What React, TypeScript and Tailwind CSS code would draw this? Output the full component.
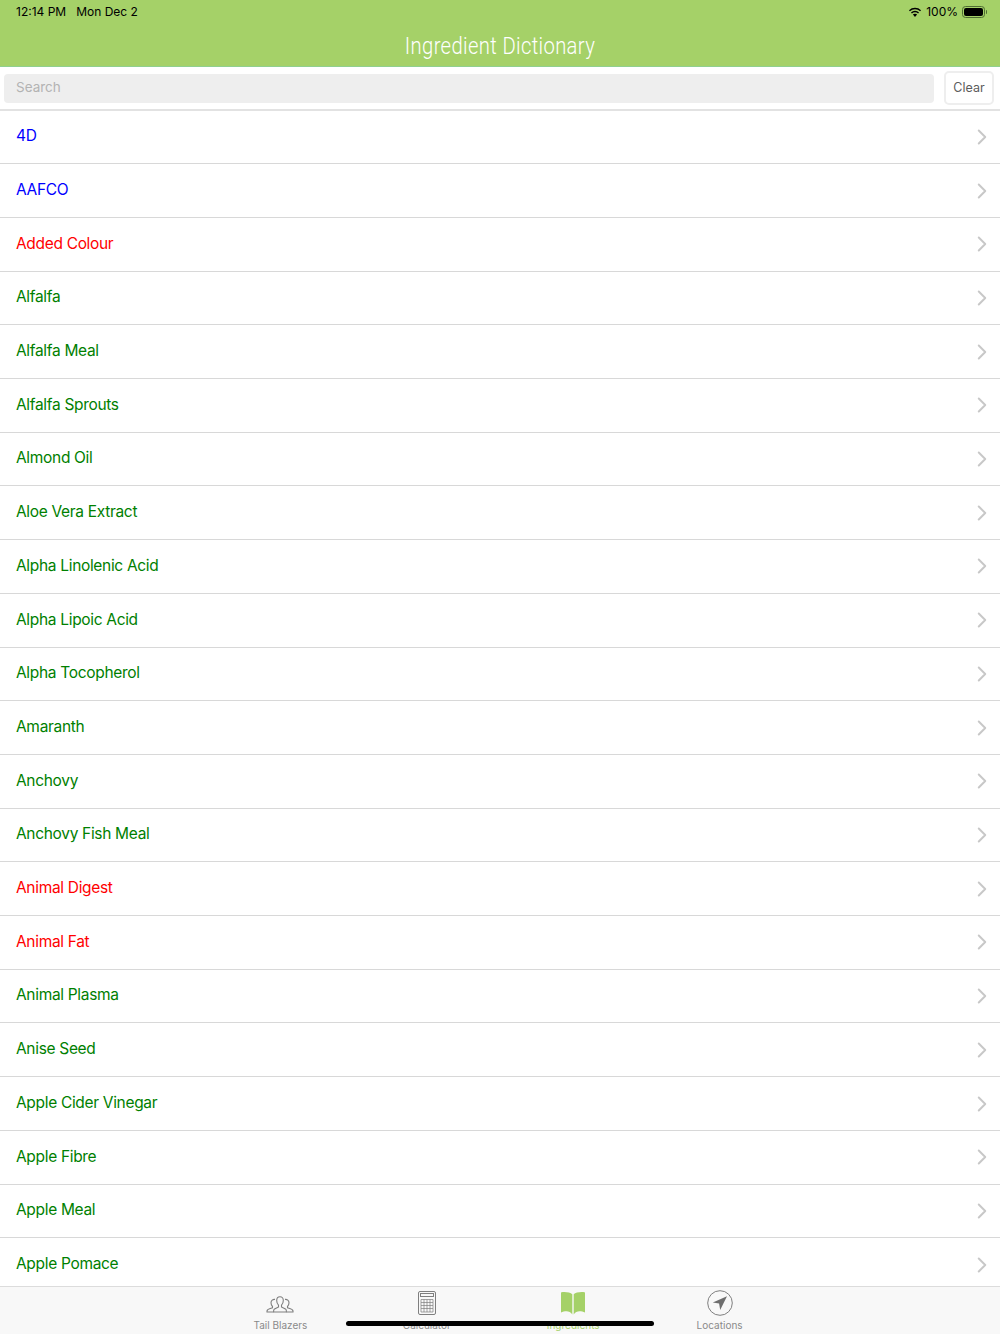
import { ChevronRight } from "lucide-react";

const BLUE = "text-[#0000ff]";
const RED = "text-[#ff0000]";
const GREEN = "text-[#008000]";

const items: { name: string; tone: string }[] = [
  { name: "4D", tone: BLUE },
  { name: "AAFCO", tone: BLUE },
  { name: "Added Colour", tone: RED },
  { name: "Alfalfa", tone: GREEN },
  { name: "Alfalfa Meal", tone: GREEN },
  { name: "Alfalfa Sprouts", tone: GREEN },
  { name: "Almond Oil", tone: GREEN },
  { name: "Aloe Vera Extract", tone: GREEN },
  { name: "Alpha Linolenic Acid", tone: GREEN },
  { name: "Alpha Lipoic Acid", tone: GREEN },
  { name: "Alpha Tocopherol", tone: GREEN },
  { name: "Amaranth", tone: GREEN },
  { name: "Anchovy", tone: GREEN },
  { name: "Anchovy Fish Meal", tone: GREEN },
  { name: "Animal Digest", tone: RED },
  { name: "Animal Fat", tone: RED },
  { name: "Animal Plasma", tone: GREEN },
  { name: "Anise Seed", tone: GREEN },
  { name: "Apple Cider Vinegar", tone: GREEN },
  { name: "Apple Fibre", tone: GREEN },
  { name: "Apple Meal", tone: GREEN },
  { name: "Apple Pomace", tone: GREEN },
];

function WifiIcon() {
  return (
    <svg viewBox="0 0 16 12" className="h-[11px] w-[14px]" fill="currentColor">
      <path d="M8 2.4c2.3 0 4.3.9 5.8 2.3l1.1-1.2A10 10 0 0 0 8 .7a10 10 0 0 0-6.900 2.800l1.100 1.200A8.400 8.400 0 0 1 8 2.400z" />
      <path d="M8 5.700c1.400 0 2.600.5 3.500 1.400l1.100-1.200A6.700 6.700 0 0 0 8 4a6.700 6.700 0 0 0-4.600 1.900l1.100 1.200A5 5 0 0 1 8 5.700z" />
      <path d="M8 7.400c-1 0-1.800.4-2.400 1L8 11l2.400-2.600c-.6-.6-1.400-1-2.400-1z" />
    </svg>
  );
}

function BatteryIcon() {
  return (
    <div className="flex items-center gap-[1px]">
      <div className="h-[12px] w-[23px] rounded-[3.5px] border border-[#4f6d33] p-[1px]">
        <div className="h-full w-full rounded-[2px] bg-black" />
      </div>
      <div className="h-[4px] w-[1px] rounded-r-sm bg-[#4f6d33]" />
    </div>
  );
}

function PeopleIcon() {
  return (
    <svg viewBox="0 0 28 17" className="mt-[2px] h-[17px] w-[28px]" fill="none" stroke="#7f7f7f" strokeWidth="1.100">
      <path d="M14 .8c-2.100 0-3.300 1.500-3.300 3.700 0 1.900.8 3.700 1.800 4.700v1.800c-1.300.7-3.800 1.400-4.500 2.500-.3.500-.4 1.200-.4 2.500h12.800c0-1.300-.1-2-.4-2.500-.7-1.100-3.200-1.800-4.500-2.500V9.200c1-1 1.800-2.800 1.800-4.700C17.300 2.300 16.100.8 14 .8z" />
      <path d="M9 3.400C6.900 3.100 5 4.400 5 6.800c0 1.500.7 2.900 1.500 3.700v1.300C5 12.500 1 13.200 1 15v1h6.500" />
      <path d="M19 3.400c2.100-.3 4 1 4 3.400 0 1.500-.7 2.900-1.500 3.700v1.300c1.500.7 5.500 1.400 5.500 3.200v1h-6.500" />
    </svg>
  );
}

function CalculatorIcon() {
  return (
    <svg viewBox="0 0 18 24" className="h-[24px] w-[18px]" fill="none" stroke="#7f7f7f" strokeWidth="1">
      <rect x="0.500" y="0.500" width="17" height="23" rx="1.500" />
      <rect x="2.500" y="2.500" width="13" height="3" />
      <path d="M3 8.500h12v12.500H3zM3 11.500h12M3 14.500h12M3 17.500h12M6 8.500v12.500M9 8.500v12.500M12 8.500v12.500" strokeWidth="0.700" />
    </svg>
  );
}

function BookIcon() {
  return (
    <svg viewBox="0 0 24 24" className="h-[24px] w-[24px]" fill="#a5d168">
      <path d="M11.300 3.200C9.500 1.200 4 .6.500 1.200c-.3 0-.5.300-.5.600v19.700c1.800-.9 3.500-1.300 5.500-1.300 2.300 0 4.300.9 5.800 3.300z" />
      <path d="M12.700 3.200c1.800-2 7.300-2.600 10.800-2 .3 0 .5.300.5.600v19.700c-1.800-.9-3.500-1.300-5.500-1.300-2.300 0-4.300.9-5.800 3.300z" />
    </svg>
  );
}

function LocationIcon() {
  return (
    <svg viewBox="0 0 26 26" className="h-[26px] w-[26px]">
      <circle cx="13" cy="13" r="12.300" fill="none" stroke="#7f7f7f" strokeWidth="1" />
      <path d="M20 6.200 5.800 12.600l6.300.9 1.100 6.500z" fill="#6e6e6e" />
    </svg>
  );
}

function TabItem({ icon, label, active = false }: { icon: React.ReactNode; label: string; active?: boolean }) {
  return (
    <div className="flex w-[146.400px] flex-col items-center">
      <div className="flex h-[26px] items-center justify-center">{icon}</div>
      <span className={`mt-[3px] text-[10px] leading-[12px] ${active ? "text-[#a5d168]" : "text-[#8a8a8a]"}`}>
        {label}
      </span>
    </div>
  );
}

export default function App() {
  return (
    <div className="relative flex h-[1334px] w-[1000px] flex-col overflow-hidden bg-white font-['Inter',sans-serif]">
      <header className="h-[67px] shrink-0 border-b border-[#8fd08f] bg-[#a5d168]">
        <div className="flex h-[24px] items-center justify-between pl-4 pr-[13px] text-[12px] text-black">
          <div className="flex gap-[10px]">
            <span>12:14 PM</span>
            <span>Mon Dec 2</span>
          </div>
          <div className="flex items-center gap-[4px]">
            <WifiIcon />
            <span>100%</span>
            <BatteryIcon />
          </div>
        </div>
        <h1 className="mt-[8px] text-center font-['Roboto',sans-serif] text-[23px] font-light leading-[30px] tracking-[0.4px] text-white [transform:scaleX(0.88)]">
          Ingredient Dictionary
        </h1>
      </header>

      <div className="flex h-[44px] shrink-0 items-center gap-[10px] border-b-2 border-[#e2e2e2] pl-1 pr-[6px]">
        <div className="flex h-[29px] flex-1 items-center rounded-[4px] bg-[#eeeeee] pb-[1px] pl-3 text-[13.500px] text-[#b3b3b3]">
          Search
        </div>
        <button className="h-[34px] w-[50px] rounded-[5px] border-2 border-[#eeeeee] bg-white text-[12.500px] text-[#5c5c5c]">
          Clear
        </button>
      </div>

      <ul className="-mt-[0.5px] min-h-0 flex-1 overflow-hidden">
        {items.map((item) => (
          <li key={item.name} className="flex h-[53.710px] items-center justify-between border-b border-[#d8d8d8] pl-4 pr-[5px]">
            <span className={`-mt-[2px] text-[15.500px] tracking-[-0.32px] ${item.tone}`}>{item.name}</span>
            <ChevronRight className="h-[26px] w-[26px] text-[#c8c8c8]" strokeWidth={1.800} />
          </li>
        ))}
      </ul>

      <nav className="flex h-[48px] shrink-0 justify-center border-t border-[#dcdcdc] bg-[#f8f8f8] pt-[3px]">
        <TabItem icon={<PeopleIcon />} label="Tail Blazers" />
        <TabItem icon={<CalculatorIcon />} label="Calculator" />
        <TabItem icon={<BookIcon />} label="Ingredients" active />
        <TabItem icon={<LocationIcon />} label="Locations" />
      </nav>

      <div className="absolute bottom-[8px] left-[346px] h-[5px] w-[308px] rounded-full bg-black" />
    </div>
  );
}
